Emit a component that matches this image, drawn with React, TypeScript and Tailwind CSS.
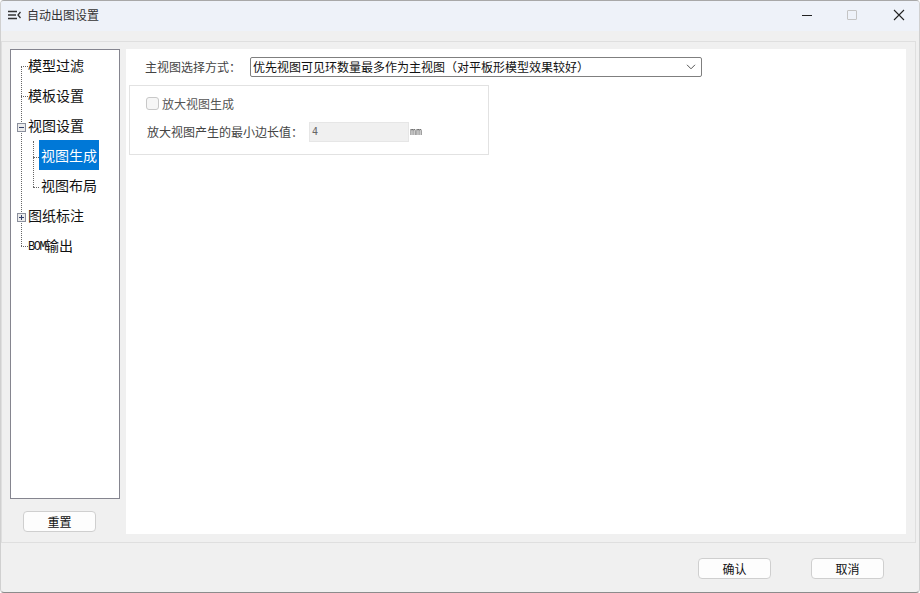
import React from "react";

const font = { fontFamily: '"Noto Sans CJK SC", "Liberation Sans", sans-serif' };
const mono = { fontFamily: '"DejaVu Sans Mono", monospace' };

function Row({ label, depth, expander, selected }: { label: React.ReactNode; depth: 0 | 1; expander?: "plus" | "minus"; selected?: boolean }) {
  return (
    <div className={depth === 0 ? "relative flex h-[30px] items-center pl-[17px]" : selected ? "relative flex h-[30px] items-center pl-[28px]" : "relative flex h-[30px] items-center pl-[30px]"}>
      {depth === 0 && !expander && (
        <span className="absolute left-[10px] top-[16px] w-[7px] border-t border-dotted border-[#666]" />
      )}
      {depth === 1 && (
        <span className="absolute left-[22px] top-[17px] w-[6px] border-t border-dotted border-[#666]" />
      )}
      {expander && (
        <span className="absolute left-[6px] top-[13px] flex h-[9px] w-[9px] items-center justify-center border border-[#8a8f9c] bg-[#ececec]">
          <span className="absolute h-px w-[5px] bg-[#33406a]" />
          {expander === "plus" && <span className="absolute h-[5px] w-px bg-[#33406a]" />}
        </span>
      )}
      <span
        className={
          selected
            ? "flex h-[30px] w-[60px] items-center justify-center bg-[#0078d7] text-[14px] text-white"
            : "whitespace-nowrap text-[14px] leading-none text-[#111]"
        }
      >
        {label}
      </span>
    </div>
  );
}

function Btn({ children }: { children: React.ReactNode }) {
  return (
    <button className="flex h-[21px] w-[73px] items-center justify-center rounded-[4px] border border-[#cfcfcf] bg-[#fdfdfd] text-[12px] leading-none text-[#111]">
      {children}
    </button>
  );
}

export default function App() {
  return (
    <div style={font} className="flex h-[593px] w-[920px] flex-col overflow-hidden rounded-[4px] border-x border-b border-t border-x-[#d0d0d0] border-b-[#8c8c8c] border-t-[#a8a8a8] bg-[#f0f0f0]">
      {/* Title bar */}
      <div className="flex h-[30px] shrink-0 items-center bg-[#eef2f9] pb-[2px] pl-[7px]">
        <svg width="13" height="12" viewBox="0 0 13 12" fill="none" stroke="#333" strokeWidth="1.3">
          <path d="M0 2.5h9M0 6h8M0 9.5h9M12.5 3 10 6l2.5 3" />
        </svg>
        <span className="ml-[6px] text-[12px] leading-none text-[#333]">自动出图设置</span>
        <div className="ml-auto flex items-center">
          <svg width="12" height="12" viewBox="0 0 12 12" stroke="#222" className="mr-[34px]">
            <path d="M1 6.5h10" />
          </svg>
          <span className="mr-[36px] h-[10px] w-[10px] rounded-[1px] border border-[#c4c4c4]" />
          <svg width="12" height="12" viewBox="0 0 12 12" stroke="#222" strokeWidth="1.1" className="mr-[14px]">
            <path d="M1 1l10 10M11 1 1 11" />
          </svg>
        </div>
      </div>

      {/* Content frame */}
      <div className="mr-[3px] mt-[10px] flex h-[502px] shrink-0 gap-[6px] border border-[#dfdfdf] pb-[8px] pl-[8px] pr-[9px] pt-[7px]">
        <div className="flex w-[110px] shrink-0 flex-col">
          <div className="relative h-[450px] w-[110px] border border-[#85858f] bg-white">
            <span className="absolute left-[10px] top-[16px] h-[180px] border-l border-dotted border-[#666]" />
            <span className="absolute left-[22px] top-[91px] h-[46px] border-l border-dotted border-[#666]" />
            <Row depth={0} label="模型过滤" />
            <Row depth={0} label="模板设置" />
            <Row depth={0} expander="minus" label="视图设置" />
            <Row depth={1} selected label="视图生成" />
            <Row depth={1} label="视图布局" />
            <Row depth={0} expander="plus" label="图纸标注" />
            <Row
              depth={0}
              label={
                <span className="flex h-[14px] items-end">
                  <span className="text-[12px] leading-[10px] tracking-[-1.5px]" style={{ fontFamily: '"Liberation Mono", monospace' }}>BOM</span>
                  <span className="leading-[14px]">输出</span>
                </span>
              }
            />
          </div>
          <div className="ml-[13px] mt-[12px]">
            <Btn>重置</Btn>
          </div>
        </div>

        <div className="flex-1 bg-white pl-[3px] pt-[8px]">
          <div className="flex h-[20px] items-center">
            <span className="ml-[16px] w-[105px] whitespace-nowrap text-[12px] leading-none text-[#444]">主视图选择方式：</span>
            <div className="flex h-[20px] w-[452px] items-center justify-between rounded-[2px] border border-[#7f7f7f] bg-white pl-[2px] pr-[5px] text-[12px] leading-none text-[#111]">
              <span className="whitespace-nowrap">优先视图可见环数量最多作为主视图（对平板形模型效果较好）</span>
              <svg width="10" height="6" viewBox="0 0 10 6" fill="none" stroke="#555">
                <path d="M1 .8 5 4.8 9 .8" />
              </svg>
            </div>
          </div>
          <div className="mt-[8px] h-[70px] w-[360px] border border-[#e2e2e2] pl-[16px] pt-[11px]">
            <div className="flex items-center">
              <span className="h-[13px] w-[13px] rounded-[3px] border border-[#c8c8c8] bg-[#f6f6f6]" />
              <span className="ml-[3px] text-[12px] leading-none text-[#555]">放大视图生成</span>
            </div>
            <div className="ml-[1px] mt-[12px] flex items-center">
              <span className="w-[162px] whitespace-nowrap text-[12px] leading-none text-[#444]">放大视图产生的最小边长值：</span>
              <div className="flex h-[20px] w-[100px] items-center border border-[#e6e6e6] bg-[#f0f0f0] pl-[2px] text-[10px] leading-none text-[#666]" style={mono}>
                4
              </div>
              <span className="ml-[1px] text-[10px] leading-none text-[#555] will-change-transform" style={mono}>mm</span>
            </div>
          </div>
        </div>
      </div>

      {/* Footer */}
      <div className="flex flex-1 justify-end gap-[40px] pr-[35px] pt-[15px]">
        <Btn>确认</Btn>
        <Btn>取消</Btn>
      </div>
    </div>
  );
}
